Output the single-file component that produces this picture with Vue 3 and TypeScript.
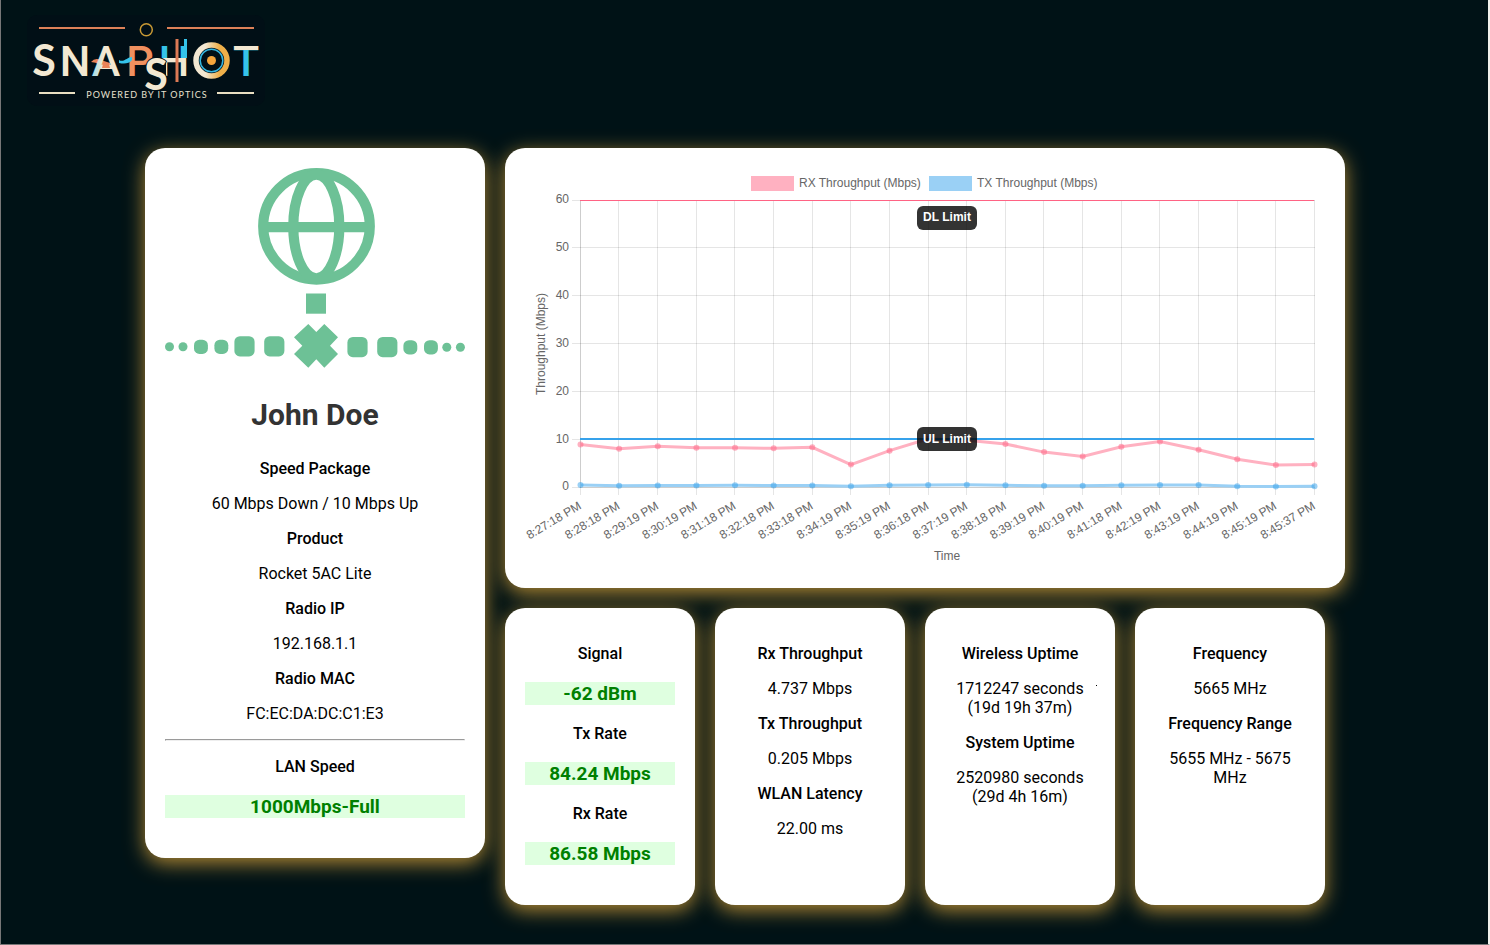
<script setup lang="ts">
interface Entry {
  label: string
  value: string
  good?: boolean
}

const subscriber: Entry[] = [
  { label: 'Speed Package', value: '60 Mbps Down / 10 Mbps Up' },
  { label: 'Product', value: 'Rocket 5AC Lite' },
  { label: 'Radio IP', value: '192.168.1.1' },
  { label: 'Radio MAC', value: 'FC:EC:DA:DC:C1:E3' },
]

const cards: Entry[][] = [
  [
    { label: 'Signal', value: '-62 dBm', good: true },
    { label: 'Tx Rate', value: '84.24 Mbps', good: true },
    { label: 'Rx Rate', value: '86.58 Mbps', good: true },
  ],
  [
    { label: 'Rx Throughput', value: '4.737 Mbps' },
    { label: 'Tx Throughput', value: '0.205 Mbps' },
    { label: 'WLAN Latency', value: '22.00 ms' },
  ],
  [
    { label: 'Wireless Uptime', value: '1712247 seconds (19d 19h 37m)' },
    { label: 'System Uptime', value: '2520980 seconds (29d 4h 16m)' },
  ],
  [
    { label: 'Frequency', value: '5665 MHz' },
    { label: 'Frequency Range', value: '5655 MHz - 5675 MHz' },
  ],
]

const times: string[] = [
  '8:27:18', '8:28:18', '8:29:19', '8:30:19', '8:31:18', '8:32:18', '8:33:18',
  '8:34:19', '8:35:19', '8:36:18', '8:37:19', '8:38:18', '8:39:19', '8:40:19',
  '8:41:18', '8:42:19', '8:43:19', '8:44:19', '8:45:19', '8:45:37',
]
const rx: number[] = [9, 8.1, 8.6, 8.3, 8.3, 8.2, 8.4, 4.8, 7.7, 10.2, 9.9, 9.1, 7.4, 6.5, 8.5, 9.6, 7.9, 5.9, 4.7, 4.8]
const tx: number[] = [0.5, 0.35, 0.4, 0.4, 0.45, 0.4, 0.4, 0.25, 0.45, 0.5, 0.55, 0.45, 0.35, 0.35, 0.45, 0.5, 0.5, 0.25, 0.22, 0.25]

const left = 55
const right = 789
const top = 32
const bottom = 319
const step = (right - left) / (times.length - 1)

const px = (i: number): number => left + 0.5 + i * step
const py = (v: number): number => bottom + 0.5 - (v * (bottom - top)) / 60
// Grid lines sit on half pixels so that they stay one pixel wide.
const gridX = (i: number): number => Math.floor(px(i) - 0.15) + 0.5
const gridY = (v: number): number => Math.floor(py(v) - 0.4) + 0.5
const labelY = (v: number): number => Math.ceil(py(v) + 2.5)
const line = (values: number[]): string => values.map((v, i) => `${px(i)},${py(v)}`).join(' ')
const ticks: number[] = [0, 10, 20, 30, 40, 50, 60]
const series = [
  { name: 'tx', values: tx },
  { name: 'rx', values: rx },
]
</script>

<template>
  <div class="page">
    <header class="header">
      <svg class="logo" viewBox="20 10 260 100" role="img" aria-label="Snapshot, powered by IT Optics">
        <defs>
          <linearGradient id="split" gradientUnits="userSpaceOnUse" x1="0" y1="45" x2="0" y2="77">
            <stop offset="0.4" stop-color="#35c3ea" />
            <stop offset="0.4" stop-color="#f3e8d2" />
          </linearGradient>
          <linearGradient id="tee" gradientUnits="userSpaceOnUse" x1="0" y1="45" x2="0" y2="77">
            <stop offset="0.17" stop-color="#f3e8d2" />
            <stop offset="0.17" stop-color="#35c3ea" />
          </linearGradient>
          <linearGradient id="ring" x1="0" y1="0" x2="1" y2="0">
            <stop offset="0.3" stop-color="#f3e8d2" />
            <stop offset="0.75" stop-color="#efb04a" />
          </linearGradient>
          <linearGradient id="ay" x1="0" y1="0" x2="1" y2="0">
            <stop offset="0.05" stop-color="#a9dfe8" />
            <stop offset="0.4" stop-color="#f3e8d2" />
          </linearGradient>
          <clipPath id="h-part"><path d="M155 40H190V80H166V63H155Z" /></clipPath>
        </defs>
        <rect x="27" y="15" width="238" height="91" rx="10" fill="#010f16" />
        <path d="M39 28H125M167 28H254" stroke="#dd8158" stroke-width="2" />
        <circle cx="146.300" cy="29.700" r="6" fill="none" stroke="#c99a35" stroke-width="1.500" />
        <path d="M39 93H75M217 93H254" stroke="#e9dfc2" stroke-width="2" />
        <g class="letters" fill="#f3e8d2">
          <text class="round" x="44" y="76">S</text>
          <text x="75" y="76">N</text>
          <path d="M91 62Q95 57 101 60L110 63V69H102Q101 63 91 62Z" fill="#e98358" />
          <text x="106" y="76" fill="url(#ay)">A</text>
          <path d="M103 64H109L110 68H102Z" fill="#e98358" />
          <text x="140" y="76" fill="#f0905f">P</text>
          <path d="M119 60C124 63 127 57 132 57V60C129 64 124 64 119 63Z" fill="#35c3ea" />
          <g clip-path="url(#h-part)"><text x="174" y="76" fill="url(#split)">H</text></g>
          <path d="M185.500 39V58" stroke="#35c3ea" stroke-width="3" />
          <path d="M177 39V82" stroke="#dd7a55" stroke-width="3" />
          <text class="round" x="156" y="90" stroke="#010f16" stroke-width="2" paint-order="stroke">S</text>
          <text x="246" y="76" fill="url(#tee)">T</text>
        </g>
        <circle cx="211.500" cy="60.500" r="15.500" fill="#010f16" stroke="url(#ring)" stroke-width="5.500" />
        <circle cx="211.500" cy="60.500" r="11.300" fill="none" stroke="#35b7e2" stroke-width="1.500" />
        <circle cx="211.500" cy="60.500" r="4.500" fill="#f5a53c" />
        <text class="tagline" x="147" y="98">POWERED BY IT OPTICS</text>
      </svg>
    </header>

    <main class="dashboard">
      <section class="card profile">
        <svg class="network" viewBox="0 0 300 200" aria-hidden="true">
          <g fill="none" stroke="#6dc196" stroke-width="10.200">
            <circle cx="151.500" cy="58.300" r="53.300" />
            <ellipse cx="151.300" cy="58.500" rx="23" ry="51.800" />
            <path d="M100 59.200H203" />
          </g>
          <g fill="#6dc196">
            <rect x="141" y="125.500" width="20" height="20.200" />
            <path d="M143.300 156L151.300 164L159.300 156L173 169.300L165 177.700L173 186L159.300 199.700L151.300 191.300L143.300 199.700L129 186L137.300 177.700L129 169.300Z" />
            <circle cx="4.500" cy="178.700" r="4.500" />
            <circle cx="18" cy="178.700" r="4.500" />
            <rect x="29" y="171.700" width="13.900" height="14.200" rx="5.500" />
            <rect x="49.400" y="171.700" width="13.900" height="14.200" rx="5.500" />
            <rect x="69.400" y="168.200" width="20.200" height="20.200" rx="5.500" />
            <rect x="99.200" y="168.200" width="20.200" height="20.200" rx="5.500" />
            <rect x="182.400" y="169" width="20.200" height="20.200" rx="5.500" />
            <rect x="212.200" y="169" width="20.200" height="20.200" rx="5.500" />
            <rect x="238.400" y="172.200" width="13.900" height="14.200" rx="5.500" />
            <rect x="259" y="172.200" width="13.900" height="14.200" rx="5.500" />
            <circle cx="281.800" cy="179.300" r="4.500" />
            <circle cx="295.400" cy="179.300" r="4.500" />
          </g>
        </svg>
        <h1>John Doe</h1>
        <template v-for="item in subscriber" :key="item.label">
          <p class="label">{{ item.label }}</p>
          <p>{{ item.value }}</p>
        </template>
        <hr />
        <p class="label">LAN Speed</p>
        <p class="good">1000Mbps-Full</p>
      </section>

      <div class="details">
        <section class="card">
          <svg class="chart" viewBox="0 0 800 400" role="img" aria-label="Throughput over time">
            <rect class="rx-key" x="226" y="8" width="43" height="15" />
            <text x="274" y="19">RX Throughput (Mbps)</text>
            <rect class="tx-key" x="404" y="8" width="43" height="15" />
            <text x="452" y="19">TX Throughput (Mbps)</text>

            <g class="grid">
              <path v-for="v in ticks" :key="'h' + v" :d="`M${left - 8} ${gridY(v)}H${right + 1}`" />
              <path v-for="(t, i) in times" :key="'v' + t" :d="`M${gridX(i)} ${top}V${bottom + 8}`" />
              <path :d="`M${left + 0.5} ${top}V${bottom + 1}M${left} ${bottom + 0.5}H${right + 1}`" />
            </g>
            <text v-for="v in ticks" :key="v" class="end" x="44" :y="labelY(v)">{{ v }}</text>
            <text
              v-for="(t, i) in times"
              :key="t"
              class="end"
              :transform="`translate(${px(i) + 1.5} 340) rotate(-31)`"
            >{{ t }} PM</text>
            <text class="middle" transform="translate(20 176) rotate(-90)">Throughput (Mbps)</text>
            <text class="middle" x="422" y="392">Time</text>

            <g v-for="s in series" :key="s.name" :class="s.name">
              <polyline :points="line(s.values)" />
              <circle v-for="(v, i) in s.values" :key="i" :cx="px(i)" :cy="py(v)" r="3" />
            </g>

            <path class="dl-limit" :d="`M${left} ${top + 0.5}H${right}`" />
            <path class="ul-limit" :d="`M${left} 271H${right}`" />
            <rect class="tag" x="392" y="38" width="60" height="24" rx="6" />
            <text class="tag-text" x="422" y="53">DL Limit</text>
            <rect class="tag" x="392" y="259" width="60" height="24" rx="6" />
            <text class="tag-text" x="422" y="275">UL Limit</text>
          </svg>
        </section>

        <div class="stats">
          <section v-for="(card, n) in cards" :key="n" class="card" :class="{ marked: n === 2 }">
            <template v-for="item in card" :key="item.label">
              <p class="label">{{ item.label }}</p>
              <p :class="{ good: item.good }">{{ item.value }}</p>
            </template>
          </section>
        </div>
      </div>
    </main>
  </div>
</template>

<style>
body {
  margin: 0;
  background: #001216;
}
</style>

<style scoped>
.page {
  box-sizing: border-box;
  min-height: 100vh;
  padding: 10px 0 38px 1px;
  border-style: solid;
  border-width: 0 2px 1px 1px;
  border-color: #777 #f1f0eb #777 #777;
  background: #001216;
  color: #000;
  font: 400 16px/19px Roboto, sans-serif;
  text-align: center;
}

.header {
  display: flex;
  padding: 0 18px 38px;
}

.logo {
  width: 260px;
  height: 100px;
}

.letters {
  font: 500 43px Roboto, sans-serif;
  text-anchor: middle;
}

.round {
  font-family: Lato, sans-serif;
  font-weight: 700;
}

.tagline {
  fill: #e6e0cf;
  font: 400 9px Lato, sans-serif;
  letter-spacing: 1px;
  text-anchor: middle;
}

.dashboard {
  display: grid;
  grid-template-columns: 340px minmax(0, 1fr);
  align-items: start;
  gap: 20px;
  max-width: 1200px;
  margin: 0 auto;
}

.card {
  padding: 20px;
  border-radius: 20px;
  background: #fff;
  box-shadow: 0 5px 20px rgba(255, 190, 66, 0.7);
}

.profile,
.stats .card {
  padding-bottom: 21px;
}

.marked {
  position: relative;
}

.marked::after {
  position: absolute;
  top: 77px;
  right: 18px;
  width: 1px;
  height: 1px;
  background: #000;
  content: "";
}

.details {
  display: grid;
  gap: 20px;
}

.stats {
  display: grid;
  grid-template-columns: repeat(4, minmax(0, 1fr));
  gap: 20px;
  padding-right: 20px;
}

.network,
.chart {
  display: block;
  width: 100%;
  overflow: visible;
}

h1 {
  margin: 28px 0 25px;
  color: #333;
  font-size: 30px;
  font-weight: 700;
  line-height: 38px;
}

p {
  margin: 16px 0;
}

.label {
  font-weight: 500;
}

.good {
  margin: 19px 0;
  background: #dfffe0;
  color: #008000;
  font-size: 19px;
  font-weight: 700;
  line-height: 23px;
}

hr {
  margin: 16px 0;
  border: 1px solid;
  border-color: #9a9a9a #eee #eee #9a9a9a;
}

.chart text {
  fill: #666;
  font: 12px "Liberation Sans", Arial, sans-serif;
}

.chart .end {
  text-anchor: end;
}

.chart .middle {
  text-anchor: middle;
}

.chart .tag-text {
  fill: #fff;
  font-weight: 700;
  text-anchor: middle;
}

.tag {
  fill: rgba(0, 0, 0, 0.8);
}

.grid {
  stroke: rgba(0, 0, 0, 0.1);
}

.rx-key {
  fill: #ffb1c1;
}

.tx-key {
  fill: #9ad0f5;
}

.rx polyline,
.tx polyline {
  fill: none;
  stroke-width: 3;
}

.rx polyline {
  stroke: #ffb1c1;
}

.tx polyline {
  stroke: #9ad0f5;
}

.rx circle {
  fill: rgba(255, 99, 132, 0.5);
}

.tx circle {
  fill: rgba(54, 162, 235, 0.5);
}

.dl-limit {
  stroke: #ff6384;
}

.ul-limit {
  stroke: #36a2eb;
  stroke-width: 2;
}

@media (max-width: 1000px) {
  .dashboard {
    grid-template-columns: minmax(0, 1fr);
    margin: 0 20px;
  }

  .stats {
    grid-template-columns: repeat(2, minmax(0, 1fr));
    padding-right: 0;
  }
}
</style>
